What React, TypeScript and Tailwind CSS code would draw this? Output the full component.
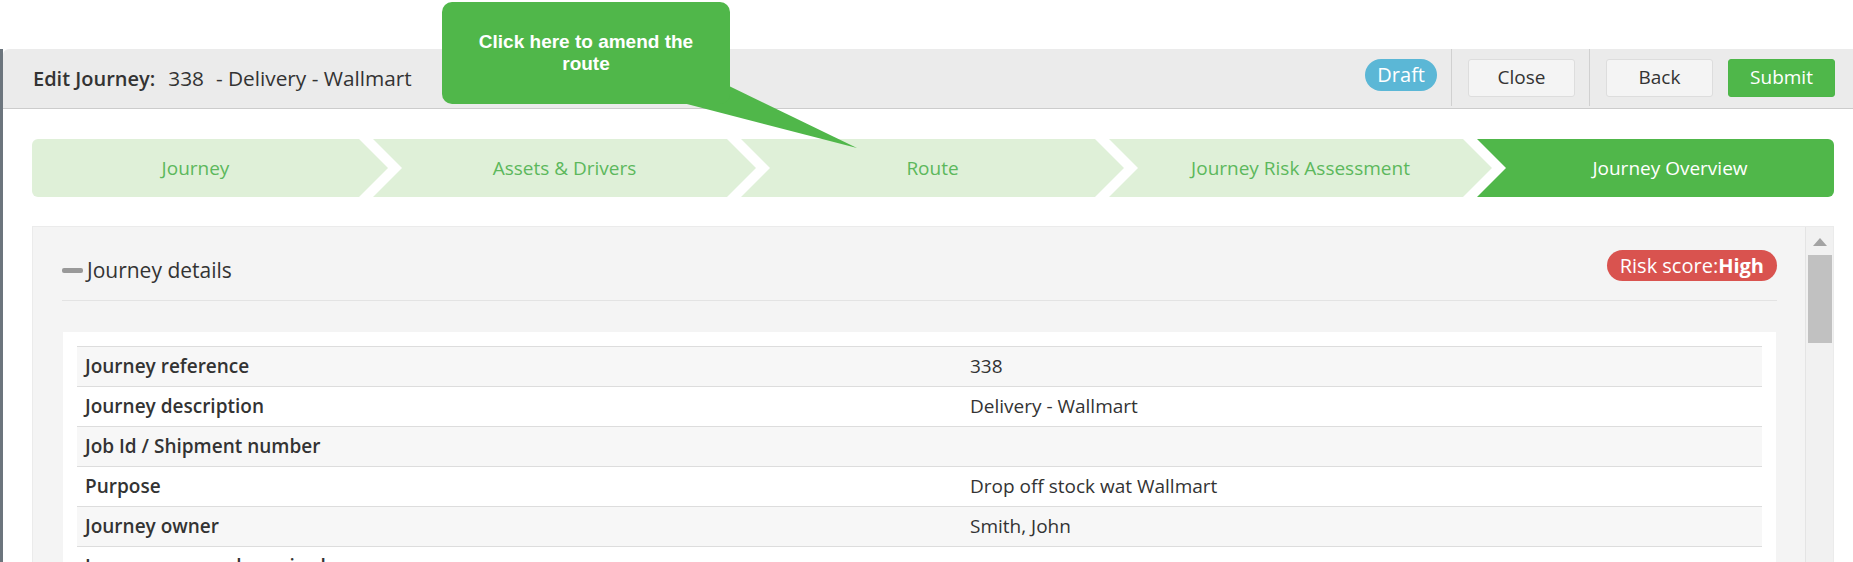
import { ReactNode } from "react";

/* ───────── header buttons ───────── */

function HeaderButton({ children, primary = false }: { children: ReactNode; primary?: boolean }) {
  const look = primary
    ? "border-[#4cb648] bg-[#4fb74a] text-white"
    : "border-[#dddddd] bg-[#f4f4f4] text-[#333333]";
  return (
    <button
      type="button"
      className={`flex h-[38px] w-[107px] items-center justify-center rounded-[3px] border text-[19px] ${look}`}
    >
      {children}
    </button>
  );
}

/* ───────── wizard steps ───────── */

const steps = [
  {
    label: "Journey",
    cls: "w-[356px] pr-[29px] rounded-l-[6px] [clip-path:polygon(0_0,calc(100%_-_29px)_0,100%_50%,calc(100%_-_29px)_100%,0_100%)]",
  },
  {
    label: "Assets & Drivers",
    cls: "-ml-[15px] w-[383px] [clip-path:polygon(0_0,calc(100%_-_29px)_0,100%_50%,calc(100%_-_29px)_100%,0_100%,29px_50%)]",
  },
  {
    label: "Route",
    cls: "-ml-[15px] w-[383px] [clip-path:polygon(0_0,calc(100%_-_29px)_0,100%_50%,calc(100%_-_29px)_100%,0_100%,29px_50%)]",
  },
  {
    label: "Journey Risk Assessment",
    cls: "-ml-[15px] w-[383px] [clip-path:polygon(0_0,calc(100%_-_29px)_0,100%_50%,calc(100%_-_29px)_100%,0_100%,29px_50%)]",
  },
  {
    label: "Journey Overview",
    active: true,
    cls: "-ml-[15px] flex-1 pl-[29px] rounded-r-[6px] [clip-path:polygon(0_0,100%_0,100%_100%,0_100%,29px_50%)]",
  },
];

function Steps() {
  return (
    <div className="ml-[29px] mr-[19px] mt-[30px] flex h-[58px] shrink-0">
      {steps.map((s) => (
        <div
          key={s.label}
          className={`flex h-full items-center justify-center text-[19px] ${s.cls} ${
            s.active ? "bg-[#50b74a] text-white" : "bg-[#dff0d8] text-[#5cb85c]"
          }`}
        >
          {s.label}
        </div>
      ))}
    </div>
  );
}

/* ───────── details table ───────── */

const details: [string, string][] = [
  ["Journey reference", "338"],
  ["Journey description", "Delivery - Wallmart"],
  ["Job Id / Shipment number", ""],
  ["Purpose", "Drop off stock wat Wallmart"],
  ["Journey owner", "Smith, John"],
  ["Journey approval required", ""],
  ["Journey approver", ""],
];

function DetailsTable() {
  return (
    <div className="mx-[1px] mt-[31px] bg-white px-[14px] pt-[14px]">
      {details.map(([label, value], i) => (
        <div
          key={label}
          className={`grid h-[40px] grid-cols-[885px_1fr] items-center border-t border-[#dddddd] text-[19px] ${
            i % 2 === 0 ? "bg-[#f7f7f7]" : "bg-white"
          }`}
        >
          <div className="pl-[8px] font-semibold">{label}</div>
          <div className="pl-[8px]">{value}</div>
        </div>
      ))}
    </div>
  );
}

function Scrollbar() {
  return (
    <div className="flex w-[28px] shrink-0 flex-col items-center border-l border-[#e4e4e4] bg-[#f1f1f1]">
      <svg width="14" height="8" viewBox="0 0 14 8" className="mt-[11px]">
        <polygon points="7,0 14,8 0,8" fill="#a3a3a3" />
      </svg>
      <div className="mt-[9px] h-[88px] w-[24px] bg-[#c1c1c1]" />
    </div>
  );
}

/* ───────── page ───────── */

export default function App() {
  return (
    <div className="relative h-screen overflow-hidden bg-white font-['Open_Sans',sans-serif] text-[#333333]">
      <div className="h-[49px]" />
      <div className="flex h-[513px]">
        <div className="w-[3px] shrink-0 bg-[#6c757d]" />
        <div className="flex min-w-0 flex-1 flex-col">
          <header className="flex h-[60px] shrink-0 items-stretch rounded-tl-[6px] border-b border-[#cccccc] bg-[#ebebeb] pl-[30px] pr-[18px]">
            <h1 className="flex flex-1 items-center text-[20px]">
              <span className="font-semibold">Edit Journey:</span>
              <span className="ml-[13px] text-[20.8px]">338</span>
              <span className="ml-[12px] text-[20.8px]">- Delivery - Wallmart</span>
            </h1>
            <div className="flex items-center pr-[14px]">
              <span className="mb-[8px] rounded-full bg-[#5bb7d6] px-[12px] text-[20px] leading-[32px] text-white">
                Draft
              </span>
            </div>
            <div className="mb-[2px] flex items-center border-l border-[#d0d0d0] pl-[16px] pr-[14px]">
              <HeaderButton>Close</HeaderButton>
            </div>
            <div className="mb-[2px] flex items-center gap-[15px] border-l border-[#d0d0d0] pl-[16px]">
              <HeaderButton>Back</HeaderButton>
              <HeaderButton primary>Submit</HeaderButton>
            </div>
          </header>

          <Steps />

          <section className="ml-[29px] mr-[19px] mt-[29px] flex min-h-0 flex-1 border border-b-0 border-[#ebebeb] bg-[#f4f4f4]">
            <div className="min-w-0 flex-1 pl-[29px] pr-[28px]">
              <div className="mt-[23px] flex h-[51px] items-start justify-between border-b border-[#e3e3e3]">
                <h2 className="mt-[6px] flex items-center text-[21px] leading-[28px]">
                  <span className="mr-[4px] h-[5px] w-[21px] rounded-[2px] bg-[#999999]" />
                  Journey details
                </h2>
                <span className="rounded-full bg-[#d9534f] px-[13px] text-[20px] leading-[31px] text-white">
                  Risk score:<span className="font-bold">High</span>
                </span>
              </div>
              <DetailsTable />
            </div>
            <Scrollbar />
          </section>
        </div>
      </div>

      {/* help callout pointing at the Route step */}
      <svg className="pointer-events-none absolute left-0 top-0" width="900" height="160">
        <polygon points="683,103 729,86 857,148" fill="#50b74a" />
      </svg>
      <div className="absolute left-[442px] top-[2px] h-[102px] w-[288px] rounded-[10px] bg-[#50b74a] pt-[29px] text-center font-['Liberation_Sans',Arial,sans-serif] text-[19px] font-bold leading-[22px] text-white">
        Click here to amend the
        <br />
        route
      </div>
    </div>
  );
}
